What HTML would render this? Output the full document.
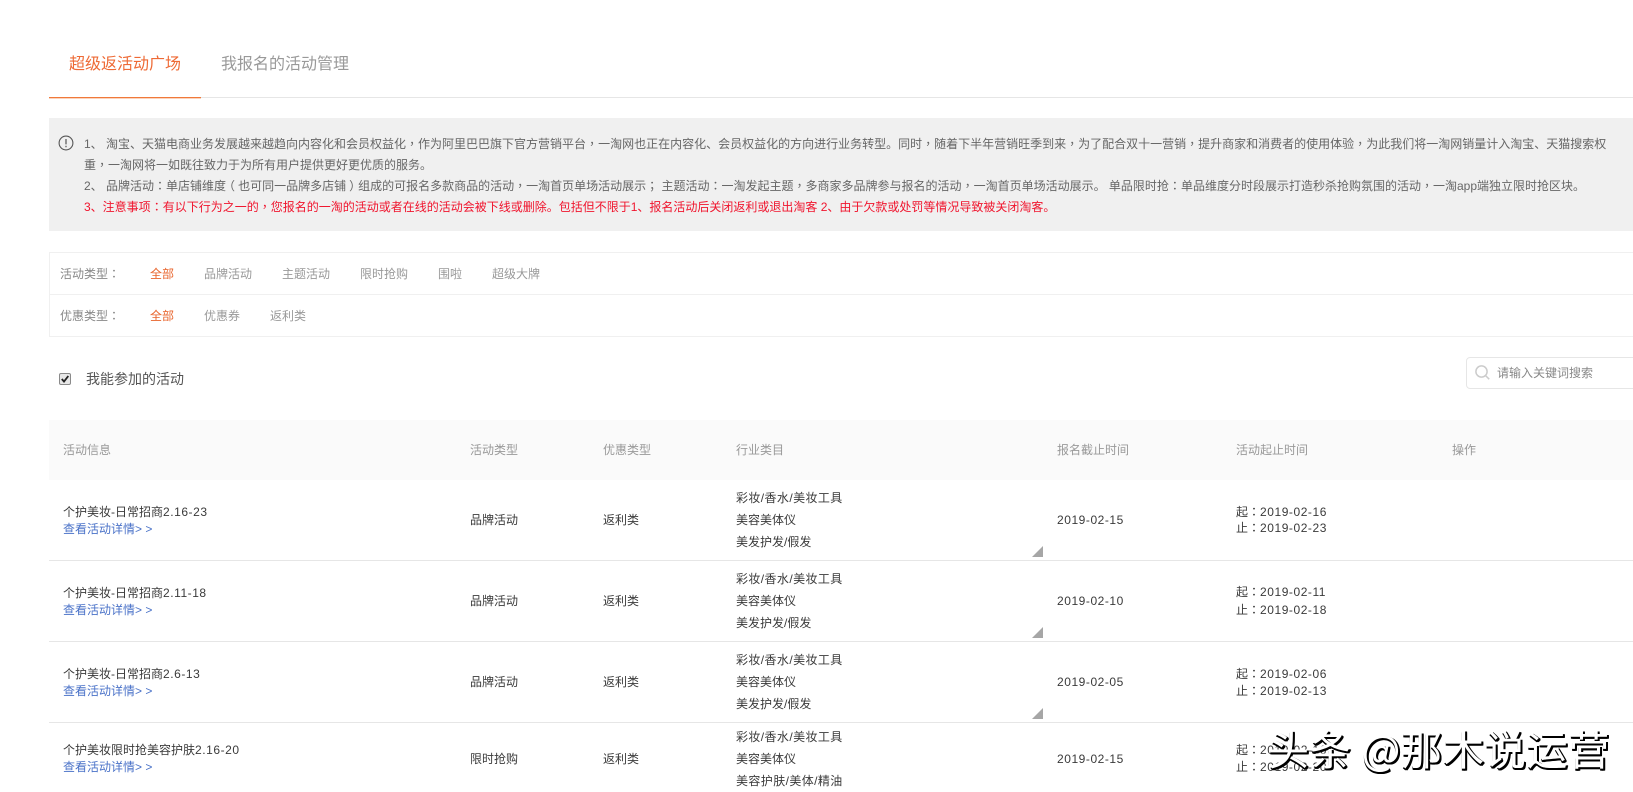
<!DOCTYPE html>
<html><head><meta charset="utf-8"><title>超级返活动广场</title>
<style>
html,body{margin:0;padding:0;background:#fff}
body{width:1633px;height:792px;overflow:hidden;position:relative;font:12px/20px "Liberation Sans","Noto Sans CJK SC",sans-serif;color:#444}
.t{position:absolute;white-space:nowrap}
.b{position:absolute}
.g{color:#999}.o{color:#e8642c}.k{color:#3a3a3a}.h{color:#888}.l{color:#4a72c8}.m{color:#666}
.n{letter-spacing:.55px}
.s{letter-spacing:.4px}
.c{font-family:"Noto Sans CJK TC",sans-serif;font-feature-settings:"locl" 0}
.pl{position:relative;left:-3px}.pr{position:relative;left:3px}
.tri{position:absolute;width:0;height:0;border-left:11px solid transparent;border-bottom:11px solid #a6a6a6}
</style></head><body>
<div class="t" style="left:69px;top:55px;font-size:16px;color:#ee6a35">超级返活动广场</div>
<div class="t" style="left:221px;top:55px;font-size:16px;color:#999">我报名的活动管理</div>
<div class="b" style="left:49px;top:97px;width:1584px;height:1px;background:#e6e6e6"></div>
<div class="b" style="left:49px;top:97px;width:152px;height:1px;background:#f0793a"></div>
<div class="b" style="left:49px;top:98px;width:152px;height:1px;background:#fbd3bc"></div>

<div class="b" style="left:49px;top:118px;width:1584px;height:113px;background:#f0f0f0"></div>
<svg class="b" style="left:58px;top:135px" width="16" height="16" viewBox="0 0 16 16"><circle cx="8" cy="8" r="6.9" fill="none" stroke="#555" stroke-width="1.1"/><path d="M8 4v5.4M8 10.8v1.4" stroke="#555" stroke-width="1.2" fill="none"/></svg>
<div class="t m" style="left:84px;top:134px">1、 淘宝、天猫电商业务发展越来越趋向内容化和会员权益化<span class="c">，</span>作为阿里巴巴旗下官方营销平台<span class="c">，</span>一淘网也正在内容化、会员权益化的方向进行业务转型。同时<span class="c">，</span>随着下半年营销旺季到来<span class="c">，</span>为了配合双十一营销<span class="c">，</span>提升商家和消费者的使用体验<span class="c">，</span>为此我们将一淘网销量计入淘宝、天猫搜索权</div>
<div class="t m" style="left:84px;top:155px">重<span class="c">，</span>一淘网将一如既往致力于为所有用户提供更好更优质的服务。</div>
<div class="t m" style="left:84px;top:176px">2、 品牌活动<span class="c">：</span>单店铺维度<span class="pl">（</span>也可同一品牌多店铺<span class="pr">）</span>组成的可报名多款商品的活动<span class="c">，</span>一淘首页单场活动展示<span class="c">；</span> 主题活动<span class="c">：</span>一淘发起主题<span class="c">，</span>多商家多品牌参与报名的活动<span class="c">，</span>一淘首页单场活动展示。 单品限时抢<span class="c">：</span>单品维度分时段展示打造秒杀抢购氛围的活动<span class="c">，</span>一淘app端独立限时抢区块。</div>
<div class="t" style="left:84px;top:197px;color:#f0142d">3、注意事项<span class="c">：</span>有以下行为之一的<span class="c">，</span>您报名的一淘的活动或者在线的活动会被下线或删除。包括但不限于1、报名活动后关闭返利或退出淘客 2、由于欠款或处罚等情况导致被关闭淘客。</div>

<div class="b" style="left:49px;top:252px;width:1584px;height:85px;box-sizing:border-box;border:1px solid #f0f0f0;border-right:0"></div>
<div class="b" style="left:49px;top:294px;width:1584px;height:1px;background:#f0f0f0"></div>
<div class="t h" style="left:60px;top:264px">活动类型<span class="c">：</span></div>
<div class="t o" style="left:150px;top:264px">全部</div>
<div class="t g" style="left:204px;top:264px">品牌活动</div>
<div class="t g" style="left:282px;top:264px">主题活动</div>
<div class="t g" style="left:360px;top:264px">限时抢购</div>
<div class="t g" style="left:438px;top:264px">围啦</div>
<div class="t g" style="left:492px;top:264px">超级大牌</div>
<div class="t h" style="left:60px;top:306px">优惠类型<span class="c">：</span></div>
<div class="t o" style="left:150px;top:306px">全部</div>
<div class="t g" style="left:204px;top:306px">优惠券</div>
<div class="t g" style="left:270px;top:306px">返利类</div>

<svg class="b" style="left:59px;top:373px" width="12" height="12" viewBox="0 0 12 12"><rect x=".5" y=".5" width="11" height="11" rx="1.5" fill="#e8e8e8" stroke="#8a8a8a"/><path d="M2.8 6l2.2 2.6L9.3 3" fill="none" stroke="#222" stroke-width="1.8"/></svg>
<div class="t m" style="left:86px;top:369px;font-size:14px;color:#555">我能参加的活动</div>

<div class="b" style="left:1466px;top:357px;width:180px;height:32px;box-sizing:border-box;border:1px solid #e6e6e6;border-radius:4px;background:#fff"></div>
<svg class="b" style="left:1474px;top:364px" width="17" height="17" viewBox="0 0 17 17"><circle cx="7.5" cy="7.5" r="5.6" fill="none" stroke="#ccc" stroke-width="1.5"/><path d="M11.6 11.6l3.6 3.6" stroke="#ccc" stroke-width="1.5" fill="none"/></svg>
<div class="t h" style="left:1497px;top:363px">请输入关键词搜索</div>

<div class="b" style="left:49px;top:420px;width:1584px;height:60px;background:#fafafa"></div>
<div class="t g" style="left:63px;top:440px">活动信息</div>
<div class="t g" style="left:470px;top:440px">活动类型</div>
<div class="t g" style="left:603px;top:440px">优惠类型</div>
<div class="t g" style="left:736px;top:440px">行业类目</div>
<div class="t g" style="left:1057px;top:440px">报名截止时间</div>
<div class="t g" style="left:1236px;top:440px">活动起止时间</div>
<div class="t g" style="left:1452px;top:440px">操作</div>

<!-- row 1 -->
<div class="t k" style="left:63px;top:502px">个护美妆-日常招商<span class="n">2.16-23</span></div>
<div class="t l" style="left:63px;top:519px">查看活动详情&gt; &gt;</div>
<div class="t k" style="left:470px;top:510px">品牌活动</div>
<div class="t k" style="left:603px;top:510px">返利类</div>
<div class="t k s" style="left:736px;top:488px">彩妆/香水/美妆工具</div>
<div class="t k" style="left:736px;top:510px">美容美体仪</div>
<div class="t k" style="left:736px;top:532px">美发护发/假发</div>
<div class="t k n" style="left:1057px;top:510px">2019-02-15</div>
<div class="t k" style="left:1236px;top:502px">起<span class="c">：</span><span class="n">2019-02-16</span></div>
<div class="t k" style="left:1236px;top:518px">止<span class="c">：</span><span class="n">2019-02-23</span></div>
<div class="tri" style="left:1032px;top:546px"></div>
<div class="b" style="left:49px;top:560px;width:1584px;height:1px;background:#e6e6e6"></div>

<!-- row 2 -->
<div class="t k" style="left:63px;top:583px">个护美妆-日常招商<span class="n">2.11-18</span></div>
<div class="t l" style="left:63px;top:600px">查看活动详情&gt; &gt;</div>
<div class="t k" style="left:470px;top:591px">品牌活动</div>
<div class="t k" style="left:603px;top:591px">返利类</div>
<div class="t k s" style="left:736px;top:569px">彩妆/香水/美妆工具</div>
<div class="t k" style="left:736px;top:591px">美容美体仪</div>
<div class="t k" style="left:736px;top:613px">美发护发/假发</div>
<div class="t k n" style="left:1057px;top:591px">2019-02-10</div>
<div class="t k" style="left:1236px;top:582px">起<span class="c">：</span><span class="n">2019-02-11</span></div>
<div class="t k" style="left:1236px;top:600px">止<span class="c">：</span><span class="n">2019-02-18</span></div>
<div class="tri" style="left:1032px;top:627px"></div>
<div class="b" style="left:49px;top:641px;width:1584px;height:1px;background:#e6e6e6"></div>

<!-- row 3 -->
<div class="t k" style="left:63px;top:664px">个护美妆-日常招商<span class="n">2.6-13</span></div>
<div class="t l" style="left:63px;top:681px">查看活动详情&gt; &gt;</div>
<div class="t k" style="left:470px;top:672px">品牌活动</div>
<div class="t k" style="left:603px;top:672px">返利类</div>
<div class="t k s" style="left:736px;top:650px">彩妆/香水/美妆工具</div>
<div class="t k" style="left:736px;top:672px">美容美体仪</div>
<div class="t k" style="left:736px;top:694px">美发护发/假发</div>
<div class="t k n" style="left:1057px;top:672px">2019-02-05</div>
<div class="t k" style="left:1236px;top:664px">起<span class="c">：</span><span class="n">2019-02-06</span></div>
<div class="t k" style="left:1236px;top:681px">止<span class="c">：</span><span class="n">2019-02-13</span></div>
<div class="tri" style="left:1032px;top:708px"></div>
<div class="b" style="left:49px;top:722px;width:1584px;height:1px;background:#e6e6e6"></div>

<!-- row 4 -->
<div class="t k" style="left:63px;top:740px">个护美妆限时抢美容护肤<span class="n">2.16-20</span></div>
<div class="t l" style="left:63px;top:757px">查看活动详情&gt; &gt;</div>
<div class="t k" style="left:470px;top:749px">限时抢购</div>
<div class="t k" style="left:603px;top:749px">返利类</div>
<div class="t k s" style="left:736px;top:727px">彩妆/香水/美妆工具</div>
<div class="t k" style="left:736px;top:749px">美容美体仪</div>
<div class="t k s" style="left:736px;top:771px">美容护肤/美体/精油</div>
<div class="t k n" style="left:1057px;top:749px">2019-02-15</div>
<div class="t k" style="left:1236px;top:740px">起<span class="c">：</span><span class="n">2019-02-16</span></div>
<div class="t k" style="left:1236px;top:757px">止<span class="c">：</span><span class="n">2019-02-20</span></div>

<div class="t" style="left:1268px;top:722px;font-size:41px;line-height:50px;letter-spacing:.8px;color:#fff;font-family:'Noto Sans CJK SC','Liberation Sans',sans-serif;font-weight:400;text-shadow:1px 2px 0 #000,2px 1px 0 #000,0 2px 0 #000,2px 2px 0 #000">头条 @那木说运营</div>
</body></html>
